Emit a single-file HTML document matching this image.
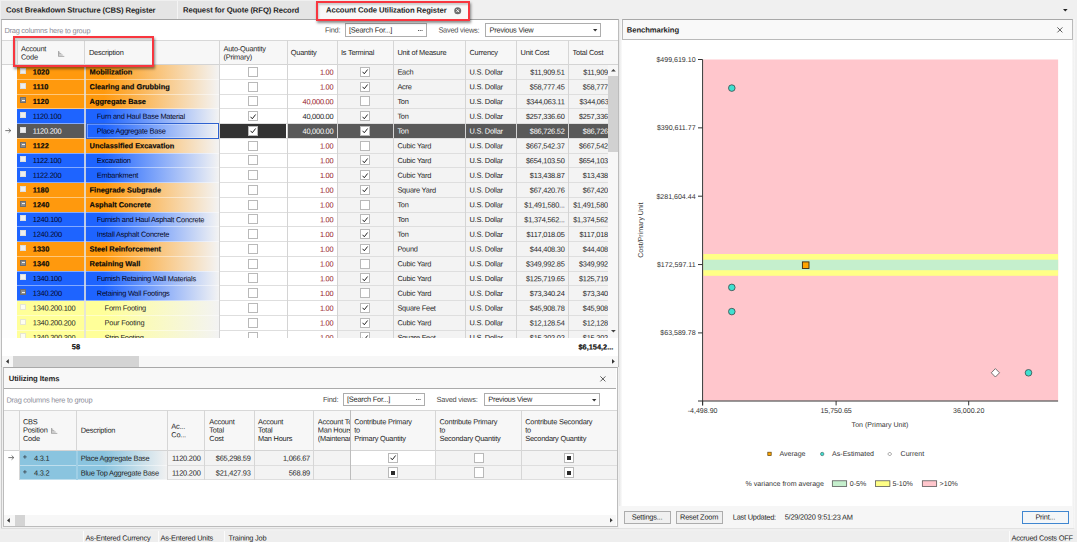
<!DOCTYPE html><html><head><meta charset="utf-8"><title>Account Code Utilization Register</title>
<style>
html,body{margin:0;padding:0}
body{width:1077px;height:546px;position:relative;overflow:hidden;background:#f0f0f0;
font-family:"Liberation Sans",sans-serif;font-size:7.4px;letter-spacing:-.22px;color:#1e1e1e;text-rendering:geometricPrecision;-webkit-font-smoothing:antialiased}
body div{position:absolute;box-sizing:border-box}
.t{white-space:nowrap;height:10px;line-height:10px}
.b{font-weight:bold;font-size:7.4px;letter-spacing:0;color:#0a0a0a;-webkit-text-stroke:.18px #0a0a0a}
.tab{font-weight:bold;font-size:7.7px;letter-spacing:-.1px;color:#262626}
.g{color:#8b8b97}
.lab{color:#4a4a4a}
.red{color:#961626}
.w{color:#fff}
.ch{font-size:6.85px;color:#222}
svg{position:absolute;overflow:visible}
</style></head><body>
<div style="left:1.00px;top:1.40px;width:175.50px;height:18.10px;background:#e5e5e5"></div>
<div style="left:177.50px;top:1.40px;width:139.00px;height:18.10px;background:#e5e5e5"></div>
<div style="left:176.50px;top:1.40px;width:1.00px;height:18.10px;background:#f4f4f4"></div>
<div class="t tab" style="left:6px;top:5px;transform:translate(0.00px,0.62px) rotate(.03deg);">Cost Breakdown Structure (CBS) Register</div>
<div class="t tab" style="left:183px;top:5px;transform:translate(0.00px,0.62px) rotate(.03deg);">Request for Quote (RFQ) Record</div>
<svg style="left:1063.2px;top:8.9px" width="5" height="3"><path d="M0 0h4.6l-2.3 2.5z" fill="#222"/></svg>
<div style="left:1.20px;top:19.00px;width:617.80px;height:348.40px;background:#fff;border:1px solid #bcbcbc;border-top-color:#a4a4a4;border-bottom-color:#a9a9a9"></div>
<div class="t g" style="left:4px;top:26px;transform:translate(0.40px,0.12px) rotate(.03deg);">Drag columns here to group</div>
<div class="t lab" style="left:325px;top:25px;transform:translate(0.00px,0.62px) rotate(.03deg);">Find:</div>
<div style="left:345.30px;top:23.40px;width:81.30px;height:13.30px;background:#fff;border:1px solid #adadad"></div>
<div class="t" style="left:349px;top:25px;transform:translate(0.00px,0.42px) rotate(.03deg);">[Search For...]</div>
<svg style="left:417.5px;top:30px" width="5" height="2"><path d="M0 .5h4.5" stroke="#444" stroke-width="1" stroke-dasharray=".9 .9"/></svg>
<div class="t lab" style="left:438px;top:25px;transform:translate(0.40px,0.62px) rotate(.03deg);">Saved views:</div>
<div style="left:485.40px;top:23.40px;width:116.00px;height:13.30px;background:#fff;border:1px solid #adadad"></div>
<div class="t" style="left:489px;top:25px;transform:translate(0.60px,0.42px) rotate(.03deg);">Previous View</div>
<svg style="left:593.3px;top:29.4px" width="5" height="3"><path d="M0 0h4.4l-2.2 2.4z" fill="#333"/></svg>
<div style="left:2.20px;top:40.00px;width:615.80px;height:24.50px;background:#f7f7f7;border-top:1px solid #d8d8d8;border-bottom:1px solid #d4d4d4"></div>
<div style="left:16.90px;top:40.00px;width:1.00px;height:24.50px;background:#d6d6d6"></div>
<div style="left:84.10px;top:40.00px;width:1.00px;height:24.50px;background:#d6d6d6"></div>
<div style="left:219.10px;top:40.00px;width:1.00px;height:24.50px;background:#d6d6d6"></div>
<div style="left:286.50px;top:40.00px;width:1.00px;height:24.50px;background:#d6d6d6"></div>
<div style="left:336.80px;top:40.00px;width:1.00px;height:24.50px;background:#d6d6d6"></div>
<div style="left:393.20px;top:40.00px;width:1.00px;height:24.50px;background:#d6d6d6"></div>
<div style="left:465.10px;top:40.00px;width:1.00px;height:24.50px;background:#d6d6d6"></div>
<div style="left:516.10px;top:40.00px;width:1.00px;height:24.50px;background:#d6d6d6"></div>
<div style="left:568.20px;top:40.00px;width:1.00px;height:24.50px;background:#d6d6d6"></div>
<div class="t" style="left:21px;top:44px;transform:translate(0.00px,0.22px) rotate(.03deg);">Account</div>
<div class="t" style="left:21px;top:52px;transform:translate(0.00px,0.52px) rotate(.03deg);">Code</div>
<svg style="left:57.6px;top:50.6px" width="7" height="6"><path d="M.5 0v5.5M.5 1.2h1.6M.5 2.6h2.8M.5 4h4.2M.5 5.4h5.8" stroke="#9a9a9a" stroke-width=".8" fill="none"/></svg>
<div class="t" style="left:89px;top:47px;transform:translate(0.00px,0.92px) rotate(.03deg);">Description</div>
<div class="t" style="left:223px;top:44px;transform:translate(0.50px,0.22px) rotate(.03deg);">Auto-Quantity</div>
<div class="t" style="left:223px;top:52px;transform:translate(0.50px,0.52px) rotate(.03deg);">(Primary)</div>
<div class="t" style="left:290px;top:47px;transform:translate(0.80px,0.92px) rotate(.03deg);">Quantity</div>
<div class="t" style="left:341px;top:47px;transform:translate(0.00px,0.92px) rotate(.03deg);">Is Terminal</div>
<div class="t" style="left:397px;top:47px;transform:translate(0.40px,0.92px) rotate(.03deg);">Unit of Measure</div>
<div class="t" style="left:469px;top:47px;transform:translate(0.50px,0.92px) rotate(.03deg);">Currency</div>
<div class="t" style="left:520px;top:47px;transform:translate(0.60px,0.92px) rotate(.03deg);">Unit Cost</div>
<div class="t" style="left:572px;top:47px;width:36.00px;overflow:hidden;transform:translate(0.60px,0.92px) rotate(.03deg);">Total Cost</div>
<div style="left:0;top:64.5px;width:608.2px;height:273.0px;overflow:hidden">
<div style="left:2.20px;top:0.00px;width:15.20px;height:14.75px;background:#fdfdfd"></div>
<div style="left:17.40px;top:0.00px;width:67.20px;height:14.75px;background:#ff990d"></div>
<div style="left:84.60px;top:0.00px;width:134.50px;height:14.75px;background:linear-gradient(to right,#ff990d 0%,#ff990d 14%,#f3f3f3 100%)"></div>
<div style="left:219.10px;top:0.00px;width:117.70px;height:14.75px;background:#fff"></div>
<div style="left:336.80px;top:0.00px;width:271.40px;height:14.75px;background:#f3f3f3"></div>
<div style="left:2.20px;top:14.75px;width:15.20px;height:14.75px;background:#fdfdfd"></div>
<div style="left:17.40px;top:14.75px;width:67.20px;height:14.75px;background:#ff990d"></div>
<div style="left:84.60px;top:14.75px;width:134.50px;height:14.75px;background:linear-gradient(to right,#ff990d 0%,#ff990d 14%,#f3f3f3 100%)"></div>
<div style="left:219.10px;top:14.75px;width:117.70px;height:14.75px;background:#fff"></div>
<div style="left:336.80px;top:14.75px;width:271.40px;height:14.75px;background:#f3f3f3"></div>
<div style="left:2.20px;top:29.50px;width:15.20px;height:14.75px;background:#fdfdfd"></div>
<div style="left:17.40px;top:29.50px;width:67.20px;height:14.75px;background:#ff990d"></div>
<div style="left:84.60px;top:29.50px;width:134.50px;height:14.75px;background:linear-gradient(to right,#ff990d 0%,#ff990d 14%,#f3f3f3 100%)"></div>
<div style="left:219.10px;top:29.50px;width:117.70px;height:14.75px;background:#fff"></div>
<div style="left:336.80px;top:29.50px;width:271.40px;height:14.75px;background:#f3f3f3"></div>
<div style="left:2.20px;top:44.25px;width:15.20px;height:14.75px;background:#fdfdfd"></div>
<div style="left:17.40px;top:44.25px;width:67.20px;height:14.75px;background:#1e64ff"></div>
<div style="left:84.60px;top:44.25px;width:134.50px;height:14.75px;background:linear-gradient(to right,#1e64ff 0%,#1e64ff 14%,#f3f3f3 100%)"></div>
<div style="left:219.10px;top:44.25px;width:117.70px;height:14.75px;background:#fff"></div>
<div style="left:336.80px;top:44.25px;width:271.40px;height:14.75px;background:#f3f3f3"></div>
<div style="left:2.20px;top:59.00px;width:15.20px;height:14.75px;background:#fdfdfd"></div>
<div style="left:17.40px;top:59.00px;width:67.20px;height:14.75px;background:#595959"></div>
<div style="left:84.60px;top:59.00px;width:134.50px;height:14.75px;background:linear-gradient(to right,#1e64ff 0%,#1e64ff 14%,#f3f3f3 100%)"></div>
<div style="left:219.10px;top:59.00px;width:67.40px;height:14.75px;background:#333"></div>
<div style="left:286.50px;top:59.00px;width:321.70px;height:14.75px;background:#595959"></div>
<div style="left:2.20px;top:73.75px;width:15.20px;height:14.75px;background:#fdfdfd"></div>
<div style="left:17.40px;top:73.75px;width:67.20px;height:14.75px;background:#ff990d"></div>
<div style="left:84.60px;top:73.75px;width:134.50px;height:14.75px;background:linear-gradient(to right,#ff990d 0%,#ff990d 14%,#f3f3f3 100%)"></div>
<div style="left:219.10px;top:73.75px;width:117.70px;height:14.75px;background:#fff"></div>
<div style="left:336.80px;top:73.75px;width:271.40px;height:14.75px;background:#f3f3f3"></div>
<div style="left:2.20px;top:88.50px;width:15.20px;height:14.75px;background:#fdfdfd"></div>
<div style="left:17.40px;top:88.50px;width:67.20px;height:14.75px;background:#1e64ff"></div>
<div style="left:84.60px;top:88.50px;width:134.50px;height:14.75px;background:linear-gradient(to right,#1e64ff 0%,#1e64ff 14%,#f3f3f3 100%)"></div>
<div style="left:219.10px;top:88.50px;width:117.70px;height:14.75px;background:#fff"></div>
<div style="left:336.80px;top:88.50px;width:271.40px;height:14.75px;background:#f3f3f3"></div>
<div style="left:2.20px;top:103.25px;width:15.20px;height:14.75px;background:#fdfdfd"></div>
<div style="left:17.40px;top:103.25px;width:67.20px;height:14.75px;background:#1e64ff"></div>
<div style="left:84.60px;top:103.25px;width:134.50px;height:14.75px;background:linear-gradient(to right,#1e64ff 0%,#1e64ff 14%,#f3f3f3 100%)"></div>
<div style="left:219.10px;top:103.25px;width:117.70px;height:14.75px;background:#fff"></div>
<div style="left:336.80px;top:103.25px;width:271.40px;height:14.75px;background:#f3f3f3"></div>
<div style="left:2.20px;top:118.00px;width:15.20px;height:14.75px;background:#fdfdfd"></div>
<div style="left:17.40px;top:118.00px;width:67.20px;height:14.75px;background:#ff990d"></div>
<div style="left:84.60px;top:118.00px;width:134.50px;height:14.75px;background:linear-gradient(to right,#ff990d 0%,#ff990d 14%,#f3f3f3 100%)"></div>
<div style="left:219.10px;top:118.00px;width:117.70px;height:14.75px;background:#fff"></div>
<div style="left:336.80px;top:118.00px;width:271.40px;height:14.75px;background:#f3f3f3"></div>
<div style="left:2.20px;top:132.75px;width:15.20px;height:14.75px;background:#fdfdfd"></div>
<div style="left:17.40px;top:132.75px;width:67.20px;height:14.75px;background:#ff990d"></div>
<div style="left:84.60px;top:132.75px;width:134.50px;height:14.75px;background:linear-gradient(to right,#ff990d 0%,#ff990d 14%,#f3f3f3 100%)"></div>
<div style="left:219.10px;top:132.75px;width:117.70px;height:14.75px;background:#fff"></div>
<div style="left:336.80px;top:132.75px;width:271.40px;height:14.75px;background:#f3f3f3"></div>
<div style="left:2.20px;top:147.50px;width:15.20px;height:14.75px;background:#fdfdfd"></div>
<div style="left:17.40px;top:147.50px;width:67.20px;height:14.75px;background:#1e64ff"></div>
<div style="left:84.60px;top:147.50px;width:134.50px;height:14.75px;background:linear-gradient(to right,#1e64ff 0%,#1e64ff 14%,#f3f3f3 100%)"></div>
<div style="left:219.10px;top:147.50px;width:117.70px;height:14.75px;background:#fff"></div>
<div style="left:336.80px;top:147.50px;width:271.40px;height:14.75px;background:#f3f3f3"></div>
<div style="left:2.20px;top:162.25px;width:15.20px;height:14.75px;background:#fdfdfd"></div>
<div style="left:17.40px;top:162.25px;width:67.20px;height:14.75px;background:#1e64ff"></div>
<div style="left:84.60px;top:162.25px;width:134.50px;height:14.75px;background:linear-gradient(to right,#1e64ff 0%,#1e64ff 14%,#f3f3f3 100%)"></div>
<div style="left:219.10px;top:162.25px;width:117.70px;height:14.75px;background:#fff"></div>
<div style="left:336.80px;top:162.25px;width:271.40px;height:14.75px;background:#f3f3f3"></div>
<div style="left:2.20px;top:177.00px;width:15.20px;height:14.75px;background:#fdfdfd"></div>
<div style="left:17.40px;top:177.00px;width:67.20px;height:14.75px;background:#ff990d"></div>
<div style="left:84.60px;top:177.00px;width:134.50px;height:14.75px;background:linear-gradient(to right,#ff990d 0%,#ff990d 14%,#f3f3f3 100%)"></div>
<div style="left:219.10px;top:177.00px;width:117.70px;height:14.75px;background:#fff"></div>
<div style="left:336.80px;top:177.00px;width:271.40px;height:14.75px;background:#f3f3f3"></div>
<div style="left:2.20px;top:191.75px;width:15.20px;height:14.75px;background:#fdfdfd"></div>
<div style="left:17.40px;top:191.75px;width:67.20px;height:14.75px;background:#ff990d"></div>
<div style="left:84.60px;top:191.75px;width:134.50px;height:14.75px;background:linear-gradient(to right,#ff990d 0%,#ff990d 14%,#f3f3f3 100%)"></div>
<div style="left:219.10px;top:191.75px;width:117.70px;height:14.75px;background:#fff"></div>
<div style="left:336.80px;top:191.75px;width:271.40px;height:14.75px;background:#f3f3f3"></div>
<div style="left:2.20px;top:206.50px;width:15.20px;height:14.75px;background:#fdfdfd"></div>
<div style="left:17.40px;top:206.50px;width:67.20px;height:14.75px;background:#1e64ff"></div>
<div style="left:84.60px;top:206.50px;width:134.50px;height:14.75px;background:linear-gradient(to right,#1e64ff 0%,#1e64ff 14%,#f3f3f3 100%)"></div>
<div style="left:219.10px;top:206.50px;width:117.70px;height:14.75px;background:#fff"></div>
<div style="left:336.80px;top:206.50px;width:271.40px;height:14.75px;background:#f3f3f3"></div>
<div style="left:2.20px;top:221.25px;width:15.20px;height:14.75px;background:#fdfdfd"></div>
<div style="left:17.40px;top:221.25px;width:67.20px;height:14.75px;background:#1e64ff"></div>
<div style="left:84.60px;top:221.25px;width:134.50px;height:14.75px;background:linear-gradient(to right,#1e64ff 0%,#1e64ff 14%,#f3f3f3 100%)"></div>
<div style="left:219.10px;top:221.25px;width:117.70px;height:14.75px;background:#fff"></div>
<div style="left:336.80px;top:221.25px;width:271.40px;height:14.75px;background:#f3f3f3"></div>
<div style="left:2.20px;top:236.00px;width:15.20px;height:14.75px;background:#fdfdfd"></div>
<div style="left:17.40px;top:236.00px;width:67.20px;height:14.75px;background:#ffff99"></div>
<div style="left:84.60px;top:236.00px;width:134.50px;height:14.75px;background:linear-gradient(to right,#ffff99 0%,#ffff99 14%,#f3f3f3 100%)"></div>
<div style="left:219.10px;top:236.00px;width:117.70px;height:14.75px;background:#fff"></div>
<div style="left:336.80px;top:236.00px;width:271.40px;height:14.75px;background:#f3f3f3"></div>
<div style="left:2.20px;top:250.75px;width:15.20px;height:14.75px;background:#fdfdfd"></div>
<div style="left:17.40px;top:250.75px;width:67.20px;height:14.75px;background:#ffff99"></div>
<div style="left:84.60px;top:250.75px;width:134.50px;height:14.75px;background:linear-gradient(to right,#ffff99 0%,#ffff99 14%,#f3f3f3 100%)"></div>
<div style="left:219.10px;top:250.75px;width:117.70px;height:14.75px;background:#fff"></div>
<div style="left:336.80px;top:250.75px;width:271.40px;height:14.75px;background:#f3f3f3"></div>
<div style="left:2.20px;top:265.50px;width:15.20px;height:14.75px;background:#fdfdfd"></div>
<div style="left:17.40px;top:265.50px;width:67.20px;height:14.75px;background:#ffff99"></div>
<div style="left:84.60px;top:265.50px;width:134.50px;height:14.75px;background:linear-gradient(to right,#ffff99 0%,#ffff99 14%,#f3f3f3 100%)"></div>
<div style="left:219.10px;top:265.50px;width:117.70px;height:14.75px;background:#fff"></div>
<div style="left:336.80px;top:265.50px;width:271.40px;height:14.75px;background:#f3f3f3"></div>
<div style="left:17.40px;top:14.25px;width:202.20px;height:1.00px;background:rgba(255,255,255,.45)"></div>
<div style="left:219.60px;top:14.25px;width:388.60px;height:1.00px;background:#dedede"></div>
<div style="left:17.40px;top:29.00px;width:202.20px;height:1.00px;background:rgba(255,255,255,.45)"></div>
<div style="left:219.60px;top:29.00px;width:388.60px;height:1.00px;background:#dedede"></div>
<div style="left:17.40px;top:43.75px;width:202.20px;height:1.00px;background:rgba(255,255,255,.45)"></div>
<div style="left:219.60px;top:43.75px;width:388.60px;height:1.00px;background:#dedede"></div>
<div style="left:17.40px;top:58.50px;width:202.20px;height:1.00px;background:rgba(255,255,255,.45)"></div>
<div style="left:219.60px;top:58.50px;width:388.60px;height:1.00px;background:#dedede"></div>
<div style="left:17.40px;top:73.25px;width:202.20px;height:1.00px;background:rgba(255,255,255,.45)"></div>
<div style="left:219.60px;top:73.25px;width:388.60px;height:1.00px;background:#dedede"></div>
<div style="left:17.40px;top:88.00px;width:202.20px;height:1.00px;background:rgba(255,255,255,.45)"></div>
<div style="left:219.60px;top:88.00px;width:388.60px;height:1.00px;background:#dedede"></div>
<div style="left:17.40px;top:102.75px;width:202.20px;height:1.00px;background:rgba(255,255,255,.45)"></div>
<div style="left:219.60px;top:102.75px;width:388.60px;height:1.00px;background:#dedede"></div>
<div style="left:17.40px;top:117.50px;width:202.20px;height:1.00px;background:rgba(255,255,255,.45)"></div>
<div style="left:219.60px;top:117.50px;width:388.60px;height:1.00px;background:#dedede"></div>
<div style="left:17.40px;top:132.25px;width:202.20px;height:1.00px;background:rgba(255,255,255,.45)"></div>
<div style="left:219.60px;top:132.25px;width:388.60px;height:1.00px;background:#dedede"></div>
<div style="left:17.40px;top:147.00px;width:202.20px;height:1.00px;background:rgba(255,255,255,.45)"></div>
<div style="left:219.60px;top:147.00px;width:388.60px;height:1.00px;background:#dedede"></div>
<div style="left:17.40px;top:161.75px;width:202.20px;height:1.00px;background:rgba(255,255,255,.45)"></div>
<div style="left:219.60px;top:161.75px;width:388.60px;height:1.00px;background:#dedede"></div>
<div style="left:17.40px;top:176.50px;width:202.20px;height:1.00px;background:rgba(255,255,255,.45)"></div>
<div style="left:219.60px;top:176.50px;width:388.60px;height:1.00px;background:#dedede"></div>
<div style="left:17.40px;top:191.25px;width:202.20px;height:1.00px;background:rgba(255,255,255,.45)"></div>
<div style="left:219.60px;top:191.25px;width:388.60px;height:1.00px;background:#dedede"></div>
<div style="left:17.40px;top:206.00px;width:202.20px;height:1.00px;background:rgba(255,255,255,.45)"></div>
<div style="left:219.60px;top:206.00px;width:388.60px;height:1.00px;background:#dedede"></div>
<div style="left:17.40px;top:220.75px;width:202.20px;height:1.00px;background:rgba(255,255,255,.45)"></div>
<div style="left:219.60px;top:220.75px;width:388.60px;height:1.00px;background:#dedede"></div>
<div style="left:17.40px;top:235.50px;width:202.20px;height:1.00px;background:rgba(255,255,255,.45)"></div>
<div style="left:219.60px;top:235.50px;width:388.60px;height:1.00px;background:#dedede"></div>
<div style="left:17.40px;top:250.25px;width:202.20px;height:1.00px;background:rgba(255,255,255,.45)"></div>
<div style="left:219.60px;top:250.25px;width:388.60px;height:1.00px;background:#dedede"></div>
<div style="left:17.40px;top:265.00px;width:202.20px;height:1.00px;background:rgba(255,255,255,.45)"></div>
<div style="left:219.60px;top:265.00px;width:388.60px;height:1.00px;background:#dedede"></div>
<div style="left:17.40px;top:279.75px;width:202.20px;height:1.00px;background:rgba(255,255,255,.45)"></div>
<div style="left:219.60px;top:279.75px;width:388.60px;height:1.00px;background:#dedede"></div>
<div style="left:20.20px;top:3.27px;width:6px;height:6px;background:#eeeeee;border:1px solid #dddddd"></div>
<div class="t b" style="left:32px;top:2px;transform:translate(0.80px,0.62px) rotate(.03deg);">1020</div>
<div class="t b" style="left:89px;top:2px;width:129.40px;overflow:hidden;transform:translate(0.60px,0.62px) rotate(.03deg);">Mobilization</div>
<div style="left:248.20px;top:2.28px;width:10.2px;height:10.2px;background:#fff;border:1px solid #b9b9b9"></div>
<div class="t red" style="left:133px;top:2px;width:200px;text-align:right;transform:translate(0.40px,0.62px) rotate(.03deg);">1.00</div>
<div style="left:360.30px;top:2.28px;width:10.2px;height:10.2px;background:#fff;border:1px solid #b9b9b9"></div>
<svg style="left:362.40px;top:4.88px" width="6" height="5.4"><path d="M.6 2.8l1.7 2L5.6 .5" stroke="#262626" stroke-width="1" fill="none"/></svg>
<div class="t" style="left:397px;top:2px;transform:translate(0.40px,0.62px) rotate(.03deg);">Each</div>
<div class="t" style="left:469px;top:2px;transform:translate(0.50px,0.62px) rotate(.03deg);">U.S. Dollar</div>
<div class="t" style="left:364px;top:2px;width:200px;text-align:right;transform:translate(0.60px,0.62px) rotate(.03deg);">$11,909.51</div>
<div class="t" style="left:417px;top:2px;width:200px;text-align:right;transform:translate(0.60px,0.62px) rotate(.03deg);">$11,909.51</div>
<div style="left:20.20px;top:18.03px;width:6px;height:6px;background:#eeeeee;border:1px solid #dddddd"></div>
<div class="t b" style="left:32px;top:17px;transform:translate(0.80px,0.37px) rotate(.03deg);">1110</div>
<div class="t b" style="left:89px;top:17px;width:129.40px;overflow:hidden;transform:translate(0.60px,0.37px) rotate(.03deg);">Clearing and Grubbing</div>
<div style="left:248.20px;top:17.02px;width:10.2px;height:10.2px;background:#fff;border:1px solid #b9b9b9"></div>
<div class="t red" style="left:133px;top:17px;width:200px;text-align:right;transform:translate(0.40px,0.37px) rotate(.03deg);">1.00</div>
<div style="left:360.30px;top:17.02px;width:10.2px;height:10.2px;background:#fff;border:1px solid #b9b9b9"></div>
<svg style="left:362.40px;top:19.62px" width="6" height="5.4"><path d="M.6 2.8l1.7 2L5.6 .5" stroke="#262626" stroke-width="1" fill="none"/></svg>
<div class="t" style="left:397px;top:17px;transform:translate(0.40px,0.37px) rotate(.03deg);">Acre</div>
<div class="t" style="left:469px;top:17px;transform:translate(0.50px,0.37px) rotate(.03deg);">U.S. Dollar</div>
<div class="t" style="left:364px;top:17px;width:200px;text-align:right;transform:translate(0.60px,0.37px) rotate(.03deg);">$58,777.45</div>
<div class="t" style="left:417px;top:17px;width:200px;text-align:right;transform:translate(0.60px,0.37px) rotate(.03deg);">$58,777.45</div>
<div style="left:20.20px;top:32.77px;width:6px;height:6px;background:#8c8c8c;border:1px solid #6e6e6e"></div>
<div style="left:21.60px;top:35.27px;width:3.2px;height:1px;background:#f0f0f0"></div>
<div class="t b" style="left:32px;top:32px;transform:translate(0.80px,0.12px) rotate(.03deg);">1120</div>
<div class="t b" style="left:89px;top:32px;width:129.40px;overflow:hidden;transform:translate(0.60px,0.12px) rotate(.03deg);">Aggregate Base</div>
<div style="left:248.20px;top:31.77px;width:10.2px;height:10.2px;background:#fff;border:1px solid #b9b9b9"></div>
<div class="t red" style="left:133px;top:32px;width:200px;text-align:right;transform:translate(0.40px,0.12px) rotate(.03deg);">40,000.00</div>
<div style="left:360.30px;top:31.77px;width:10.2px;height:10.2px;background:#fff;border:1px solid #b9b9b9"></div>
<div class="t" style="left:397px;top:32px;transform:translate(0.40px,0.12px) rotate(.03deg);">Ton</div>
<div class="t" style="left:469px;top:32px;transform:translate(0.50px,0.12px) rotate(.03deg);">U.S. Dollar</div>
<div class="t" style="left:364px;top:32px;width:200px;text-align:right;transform:translate(0.60px,0.12px) rotate(.03deg);">$344,063.11</div>
<div class="t" style="left:417px;top:32px;width:200px;text-align:right;transform:translate(0.60px,0.12px) rotate(.03deg);">$344,063.11</div>
<div style="left:20.20px;top:47.52px;width:6px;height:6px;background:#eeeeee;border:1px solid #dddddd"></div>
<div class="t" style="left:32px;top:46px;transform:translate(0.80px,0.87px) rotate(.03deg);color:#040418">1120.100</div>
<div class="t" style="left:96px;top:46px;width:122.20px;overflow:hidden;transform:translate(0.80px,0.87px) rotate(.03deg);color:#040418">Furn and Haul Base Material</div>
<div style="left:248.20px;top:46.52px;width:10.2px;height:10.2px;background:#fff;border:1px solid #b9b9b9"></div>
<svg style="left:250.30px;top:49.12px" width="6" height="5.4"><path d="M.6 2.8l1.7 2L5.6 .5" stroke="#262626" stroke-width="1" fill="none"/></svg>
<div class="t" style="left:133px;top:46px;width:200px;text-align:right;transform:translate(0.40px,0.87px) rotate(.03deg);">40,000.00</div>
<div style="left:360.30px;top:46.52px;width:10.2px;height:10.2px;background:#fff;border:1px solid #b9b9b9"></div>
<svg style="left:362.40px;top:49.12px" width="6" height="5.4"><path d="M.6 2.8l1.7 2L5.6 .5" stroke="#262626" stroke-width="1" fill="none"/></svg>
<div class="t" style="left:397px;top:46px;transform:translate(0.40px,0.87px) rotate(.03deg);">Ton</div>
<div class="t" style="left:469px;top:46px;transform:translate(0.50px,0.87px) rotate(.03deg);">U.S. Dollar</div>
<div class="t" style="left:364px;top:46px;width:200px;text-align:right;transform:translate(0.60px,0.87px) rotate(.03deg);">$257,336.60</div>
<div class="t" style="left:417px;top:46px;width:200px;text-align:right;transform:translate(0.60px,0.87px) rotate(.03deg);">$257,336.60</div>
<div style="left:20.20px;top:62.27px;width:6px;height:6px;background:#eeeeee;border:1px solid #dddddd"></div>
<div class="t" style="left:32px;top:61px;transform:translate(0.80px,0.62px) rotate(.03deg);color:#fff">1120.200</div>
<div class="t" style="left:96px;top:61px;width:122.20px;overflow:hidden;transform:translate(0.80px,0.62px) rotate(.03deg);color:#040418">Place Aggregate Base</div>
<div style="left:248.20px;top:61.27px;width:10.2px;height:10.2px;background:#fff;border:1px solid #b9b9b9"></div>
<svg style="left:250.30px;top:63.88px" width="6" height="5.4"><path d="M.6 2.8l1.7 2L5.6 .5" stroke="#262626" stroke-width="1" fill="none"/></svg>
<div class="t w" style="left:133px;top:61px;width:200px;text-align:right;transform:translate(0.40px,0.62px) rotate(.03deg);">40,000.00</div>
<div style="left:360.30px;top:61.27px;width:10.2px;height:10.2px;background:#fff;border:1px solid #b9b9b9"></div>
<svg style="left:362.40px;top:63.88px" width="6" height="5.4"><path d="M.6 2.8l1.7 2L5.6 .5" stroke="#262626" stroke-width="1" fill="none"/></svg>
<div class="t w" style="left:397px;top:61px;transform:translate(0.40px,0.62px) rotate(.03deg);">Ton</div>
<div class="t w" style="left:469px;top:61px;transform:translate(0.50px,0.62px) rotate(.03deg);">U.S. Dollar</div>
<div class="t w" style="left:364px;top:61px;width:200px;text-align:right;transform:translate(0.60px,0.62px) rotate(.03deg);">$86,726.52</div>
<div class="t w" style="left:417px;top:61px;width:200px;text-align:right;transform:translate(0.60px,0.62px) rotate(.03deg);">$86,726.52</div>
<div style="left:85.60px;top:58.70px;width:133.40px;height:15.35px;border:1px solid #2f62d0;box-shadow:inset 0 0 0 .6px rgba(255,255,255,.6)"></div>
<svg style="left:4.6px;top:63.77px" width="7" height="6"><path d="M.3 2.6h5.4M3.6 .5l2.2 2.1-2.2 2.1" stroke="#555" stroke-width=".8" fill="none"/></svg>
<div style="left:20.20px;top:77.02px;width:6px;height:6px;background:#8c8c8c;border:1px solid #6e6e6e"></div>
<div style="left:21.60px;top:79.52px;width:3.2px;height:1px;background:#f0f0f0"></div>
<div class="t b" style="left:32px;top:76px;transform:translate(0.80px,0.37px) rotate(.03deg);">1122</div>
<div class="t b" style="left:89px;top:76px;width:129.40px;overflow:hidden;transform:translate(0.60px,0.37px) rotate(.03deg);">Unclassified Excavation</div>
<div style="left:248.20px;top:76.03px;width:10.2px;height:10.2px;background:#fff;border:1px solid #b9b9b9"></div>
<div class="t red" style="left:133px;top:76px;width:200px;text-align:right;transform:translate(0.40px,0.37px) rotate(.03deg);">1.00</div>
<div style="left:360.30px;top:76.03px;width:10.2px;height:10.2px;background:#fff;border:1px solid #b9b9b9"></div>
<div class="t" style="left:397px;top:76px;transform:translate(0.40px,0.37px) rotate(.03deg);">Cubic Yard</div>
<div class="t" style="left:469px;top:76px;transform:translate(0.50px,0.37px) rotate(.03deg);">U.S. Dollar</div>
<div class="t" style="left:364px;top:76px;width:200px;text-align:right;transform:translate(0.60px,0.37px) rotate(.03deg);">$667,542.37</div>
<div class="t" style="left:417px;top:76px;width:200px;text-align:right;transform:translate(0.60px,0.37px) rotate(.03deg);">$667,542.37</div>
<div style="left:20.20px;top:91.77px;width:6px;height:6px;background:#eeeeee;border:1px solid #dddddd"></div>
<div class="t" style="left:32px;top:91px;transform:translate(0.80px,0.12px) rotate(.03deg);color:#040418">1122.100</div>
<div class="t" style="left:96px;top:91px;width:122.20px;overflow:hidden;transform:translate(0.80px,0.12px) rotate(.03deg);color:#040418">Excavation</div>
<div style="left:248.20px;top:90.78px;width:10.2px;height:10.2px;background:#fff;border:1px solid #b9b9b9"></div>
<div class="t red" style="left:133px;top:91px;width:200px;text-align:right;transform:translate(0.40px,0.12px) rotate(.03deg);">1.00</div>
<div style="left:360.30px;top:90.78px;width:10.2px;height:10.2px;background:#fff;border:1px solid #b9b9b9"></div>
<svg style="left:362.40px;top:93.38px" width="6" height="5.4"><path d="M.6 2.8l1.7 2L5.6 .5" stroke="#262626" stroke-width="1" fill="none"/></svg>
<div class="t" style="left:397px;top:91px;transform:translate(0.40px,0.12px) rotate(.03deg);">Cubic Yard</div>
<div class="t" style="left:469px;top:91px;transform:translate(0.50px,0.12px) rotate(.03deg);">U.S. Dollar</div>
<div class="t" style="left:364px;top:91px;width:200px;text-align:right;transform:translate(0.60px,0.12px) rotate(.03deg);">$654,103.50</div>
<div class="t" style="left:417px;top:91px;width:200px;text-align:right;transform:translate(0.60px,0.12px) rotate(.03deg);">$654,103.50</div>
<div style="left:20.20px;top:106.52px;width:6px;height:6px;background:#eeeeee;border:1px solid #dddddd"></div>
<div class="t" style="left:32px;top:105px;transform:translate(0.80px,0.87px) rotate(.03deg);color:#040418">1122.200</div>
<div class="t" style="left:96px;top:105px;width:122.20px;overflow:hidden;transform:translate(0.80px,0.87px) rotate(.03deg);color:#040418">Embankment</div>
<div style="left:248.20px;top:105.53px;width:10.2px;height:10.2px;background:#fff;border:1px solid #b9b9b9"></div>
<div class="t red" style="left:133px;top:105px;width:200px;text-align:right;transform:translate(0.40px,0.87px) rotate(.03deg);">1.00</div>
<div style="left:360.30px;top:105.53px;width:10.2px;height:10.2px;background:#fff;border:1px solid #b9b9b9"></div>
<svg style="left:362.40px;top:108.12px" width="6" height="5.4"><path d="M.6 2.8l1.7 2L5.6 .5" stroke="#262626" stroke-width="1" fill="none"/></svg>
<div class="t" style="left:397px;top:105px;transform:translate(0.40px,0.87px) rotate(.03deg);">Cubic Yard</div>
<div class="t" style="left:469px;top:105px;transform:translate(0.50px,0.87px) rotate(.03deg);">U.S. Dollar</div>
<div class="t" style="left:364px;top:105px;width:200px;text-align:right;transform:translate(0.60px,0.87px) rotate(.03deg);">$13,438.87</div>
<div class="t" style="left:417px;top:105px;width:200px;text-align:right;transform:translate(0.60px,0.87px) rotate(.03deg);">$13,438.87</div>
<div style="left:20.20px;top:121.27px;width:6px;height:6px;background:#eeeeee;border:1px solid #dddddd"></div>
<div class="t b" style="left:32px;top:120px;transform:translate(0.80px,0.62px) rotate(.03deg);">1180</div>
<div class="t b" style="left:89px;top:120px;width:129.40px;overflow:hidden;transform:translate(0.60px,0.62px) rotate(.03deg);">Finegrade Subgrade</div>
<div style="left:248.20px;top:120.28px;width:10.2px;height:10.2px;background:#fff;border:1px solid #b9b9b9"></div>
<div class="t red" style="left:133px;top:120px;width:200px;text-align:right;transform:translate(0.40px,0.62px) rotate(.03deg);">1.00</div>
<div style="left:360.30px;top:120.28px;width:10.2px;height:10.2px;background:#fff;border:1px solid #b9b9b9"></div>
<svg style="left:362.40px;top:122.88px" width="6" height="5.4"><path d="M.6 2.8l1.7 2L5.6 .5" stroke="#262626" stroke-width="1" fill="none"/></svg>
<div class="t" style="left:397px;top:120px;transform:translate(0.40px,0.62px) rotate(.03deg);">Square Yard</div>
<div class="t" style="left:469px;top:120px;transform:translate(0.50px,0.62px) rotate(.03deg);">U.S. Dollar</div>
<div class="t" style="left:364px;top:120px;width:200px;text-align:right;transform:translate(0.60px,0.62px) rotate(.03deg);">$67,420.76</div>
<div class="t" style="left:417px;top:120px;width:200px;text-align:right;transform:translate(0.60px,0.62px) rotate(.03deg);">$67,420.76</div>
<div style="left:20.20px;top:136.03px;width:6px;height:6px;background:#8c8c8c;border:1px solid #6e6e6e"></div>
<div style="left:21.60px;top:138.53px;width:3.2px;height:1px;background:#f0f0f0"></div>
<div class="t b" style="left:32px;top:135px;transform:translate(0.80px,0.37px) rotate(.03deg);">1240</div>
<div class="t b" style="left:89px;top:135px;width:129.40px;overflow:hidden;transform:translate(0.60px,0.37px) rotate(.03deg);">Asphalt Concrete</div>
<div style="left:248.20px;top:135.03px;width:10.2px;height:10.2px;background:#fff;border:1px solid #b9b9b9"></div>
<div class="t red" style="left:133px;top:135px;width:200px;text-align:right;transform:translate(0.40px,0.37px) rotate(.03deg);">1.00</div>
<div style="left:360.30px;top:135.03px;width:10.2px;height:10.2px;background:#fff;border:1px solid #b9b9b9"></div>
<div class="t" style="left:397px;top:135px;transform:translate(0.40px,0.37px) rotate(.03deg);">Ton</div>
<div class="t" style="left:469px;top:135px;transform:translate(0.50px,0.37px) rotate(.03deg);">U.S. Dollar</div>
<div class="t" style="left:364px;top:135px;width:200px;text-align:right;transform:translate(0.60px,0.37px) rotate(.03deg);">$1,491,580...</div>
<div class="t" style="left:417px;top:135px;width:200px;text-align:right;transform:translate(0.60px,0.37px) rotate(.03deg);">$1,491,580.35</div>
<div style="left:20.20px;top:150.78px;width:6px;height:6px;background:#eeeeee;border:1px solid #dddddd"></div>
<div class="t" style="left:32px;top:150px;transform:translate(0.80px,0.12px) rotate(.03deg);color:#040418">1240.100</div>
<div class="t" style="left:96px;top:150px;width:122.20px;overflow:hidden;transform:translate(0.80px,0.12px) rotate(.03deg);color:#040418">Furnish and Haul Asphalt Concrete</div>
<div style="left:248.20px;top:149.78px;width:10.2px;height:10.2px;background:#fff;border:1px solid #b9b9b9"></div>
<div class="t red" style="left:133px;top:150px;width:200px;text-align:right;transform:translate(0.40px,0.12px) rotate(.03deg);">1.00</div>
<div style="left:360.30px;top:149.78px;width:10.2px;height:10.2px;background:#fff;border:1px solid #b9b9b9"></div>
<svg style="left:362.40px;top:152.38px" width="6" height="5.4"><path d="M.6 2.8l1.7 2L5.6 .5" stroke="#262626" stroke-width="1" fill="none"/></svg>
<div class="t" style="left:397px;top:150px;transform:translate(0.40px,0.12px) rotate(.03deg);">Ton</div>
<div class="t" style="left:469px;top:150px;transform:translate(0.50px,0.12px) rotate(.03deg);">U.S. Dollar</div>
<div class="t" style="left:364px;top:150px;width:200px;text-align:right;transform:translate(0.60px,0.12px) rotate(.03deg);">$1,374,562...</div>
<div class="t" style="left:417px;top:150px;width:200px;text-align:right;transform:translate(0.60px,0.12px) rotate(.03deg);">$1,374,562.30</div>
<div style="left:20.20px;top:165.53px;width:6px;height:6px;background:#eeeeee;border:1px solid #dddddd"></div>
<div class="t" style="left:32px;top:164px;transform:translate(0.80px,0.87px) rotate(.03deg);color:#040418">1240.200</div>
<div class="t" style="left:96px;top:164px;width:122.20px;overflow:hidden;transform:translate(0.80px,0.87px) rotate(.03deg);color:#040418">Install Asphalt Concrete</div>
<div style="left:248.20px;top:164.53px;width:10.2px;height:10.2px;background:#fff;border:1px solid #b9b9b9"></div>
<div class="t red" style="left:133px;top:164px;width:200px;text-align:right;transform:translate(0.40px,0.87px) rotate(.03deg);">1.00</div>
<div style="left:360.30px;top:164.53px;width:10.2px;height:10.2px;background:#fff;border:1px solid #b9b9b9"></div>
<svg style="left:362.40px;top:167.12px" width="6" height="5.4"><path d="M.6 2.8l1.7 2L5.6 .5" stroke="#262626" stroke-width="1" fill="none"/></svg>
<div class="t" style="left:397px;top:164px;transform:translate(0.40px,0.87px) rotate(.03deg);">Ton</div>
<div class="t" style="left:469px;top:164px;transform:translate(0.50px,0.87px) rotate(.03deg);">U.S. Dollar</div>
<div class="t" style="left:364px;top:164px;width:200px;text-align:right;transform:translate(0.60px,0.87px) rotate(.03deg);">$117,018.05</div>
<div class="t" style="left:417px;top:164px;width:200px;text-align:right;transform:translate(0.60px,0.87px) rotate(.03deg);">$117,018.05</div>
<div style="left:20.20px;top:180.28px;width:6px;height:6px;background:#eeeeee;border:1px solid #dddddd"></div>
<div class="t b" style="left:32px;top:179px;transform:translate(0.80px,0.62px) rotate(.03deg);">1330</div>
<div class="t b" style="left:89px;top:179px;width:129.40px;overflow:hidden;transform:translate(0.60px,0.62px) rotate(.03deg);">Steel Reinforcement</div>
<div style="left:248.20px;top:179.28px;width:10.2px;height:10.2px;background:#fff;border:1px solid #b9b9b9"></div>
<div class="t red" style="left:133px;top:179px;width:200px;text-align:right;transform:translate(0.40px,0.62px) rotate(.03deg);">1.00</div>
<div style="left:360.30px;top:179.28px;width:10.2px;height:10.2px;background:#fff;border:1px solid #b9b9b9"></div>
<svg style="left:362.40px;top:181.88px" width="6" height="5.4"><path d="M.6 2.8l1.7 2L5.6 .5" stroke="#262626" stroke-width="1" fill="none"/></svg>
<div class="t" style="left:397px;top:179px;transform:translate(0.40px,0.62px) rotate(.03deg);">Pound</div>
<div class="t" style="left:469px;top:179px;transform:translate(0.50px,0.62px) rotate(.03deg);">U.S. Dollar</div>
<div class="t" style="left:364px;top:179px;width:200px;text-align:right;transform:translate(0.60px,0.62px) rotate(.03deg);">$44,408.30</div>
<div class="t" style="left:417px;top:179px;width:200px;text-align:right;transform:translate(0.60px,0.62px) rotate(.03deg);">$44,408.30</div>
<div style="left:20.20px;top:195.03px;width:6px;height:6px;background:#8c8c8c;border:1px solid #6e6e6e"></div>
<div style="left:21.60px;top:197.53px;width:3.2px;height:1px;background:#f0f0f0"></div>
<div class="t b" style="left:32px;top:194px;transform:translate(0.80px,0.37px) rotate(.03deg);">1340</div>
<div class="t b" style="left:89px;top:194px;width:129.40px;overflow:hidden;transform:translate(0.60px,0.37px) rotate(.03deg);">Retaining Wall</div>
<div style="left:248.20px;top:194.03px;width:10.2px;height:10.2px;background:#fff;border:1px solid #b9b9b9"></div>
<div class="t red" style="left:133px;top:194px;width:200px;text-align:right;transform:translate(0.40px,0.37px) rotate(.03deg);">1.00</div>
<div style="left:360.30px;top:194.03px;width:10.2px;height:10.2px;background:#fff;border:1px solid #b9b9b9"></div>
<div class="t" style="left:397px;top:194px;transform:translate(0.40px,0.37px) rotate(.03deg);">Cubic Yard</div>
<div class="t" style="left:469px;top:194px;transform:translate(0.50px,0.37px) rotate(.03deg);">U.S. Dollar</div>
<div class="t" style="left:364px;top:194px;width:200px;text-align:right;transform:translate(0.60px,0.37px) rotate(.03deg);">$349,992.85</div>
<div class="t" style="left:417px;top:194px;width:200px;text-align:right;transform:translate(0.60px,0.37px) rotate(.03deg);">$349,992.85</div>
<div style="left:20.20px;top:209.78px;width:6px;height:6px;background:#eeeeee;border:1px solid #dddddd"></div>
<div class="t" style="left:32px;top:209px;transform:translate(0.80px,0.12px) rotate(.03deg);color:#040418">1340.100</div>
<div class="t" style="left:96px;top:209px;width:122.20px;overflow:hidden;transform:translate(0.80px,0.12px) rotate(.03deg);color:#040418">Furnish Retaining Wall Materials</div>
<div style="left:248.20px;top:208.78px;width:10.2px;height:10.2px;background:#fff;border:1px solid #b9b9b9"></div>
<div class="t red" style="left:133px;top:209px;width:200px;text-align:right;transform:translate(0.40px,0.12px) rotate(.03deg);">1.00</div>
<div style="left:360.30px;top:208.78px;width:10.2px;height:10.2px;background:#fff;border:1px solid #b9b9b9"></div>
<svg style="left:362.40px;top:211.38px" width="6" height="5.4"><path d="M.6 2.8l1.7 2L5.6 .5" stroke="#262626" stroke-width="1" fill="none"/></svg>
<div class="t" style="left:397px;top:209px;transform:translate(0.40px,0.12px) rotate(.03deg);">Cubic Yard</div>
<div class="t" style="left:469px;top:209px;transform:translate(0.50px,0.12px) rotate(.03deg);">U.S. Dollar</div>
<div class="t" style="left:364px;top:209px;width:200px;text-align:right;transform:translate(0.60px,0.12px) rotate(.03deg);">$125,719.65</div>
<div class="t" style="left:417px;top:209px;width:200px;text-align:right;transform:translate(0.60px,0.12px) rotate(.03deg);">$125,719.65</div>
<div style="left:20.20px;top:224.53px;width:6px;height:6px;background:#8c8c8c;border:1px solid #6e6e6e"></div>
<div style="left:21.60px;top:227.03px;width:3.2px;height:1px;background:#f0f0f0"></div>
<div class="t" style="left:32px;top:223px;transform:translate(0.80px,0.87px) rotate(.03deg);color:#040418">1340.200</div>
<div class="t" style="left:96px;top:223px;width:122.20px;overflow:hidden;transform:translate(0.80px,0.87px) rotate(.03deg);color:#040418">Retaining Wall Footings</div>
<div style="left:248.20px;top:223.53px;width:10.2px;height:10.2px;background:#fff;border:1px solid #b9b9b9"></div>
<div class="t red" style="left:133px;top:223px;width:200px;text-align:right;transform:translate(0.40px,0.87px) rotate(.03deg);">1.00</div>
<div style="left:360.30px;top:223.53px;width:10.2px;height:10.2px;background:#fff;border:1px solid #b9b9b9"></div>
<div class="t" style="left:397px;top:223px;transform:translate(0.40px,0.87px) rotate(.03deg);">Cubic Yard</div>
<div class="t" style="left:469px;top:223px;transform:translate(0.50px,0.87px) rotate(.03deg);">U.S. Dollar</div>
<div class="t" style="left:364px;top:223px;width:200px;text-align:right;transform:translate(0.60px,0.87px) rotate(.03deg);">$73,340.24</div>
<div class="t" style="left:417px;top:223px;width:200px;text-align:right;transform:translate(0.60px,0.87px) rotate(.03deg);">$73,340.24</div>
<div style="left:20.20px;top:239.28px;width:6px;height:6px;background:#fdfdf0;border:1px solid #e6e6d2"></div>
<div class="t" style="left:32px;top:238px;transform:translate(0.80px,0.62px) rotate(.03deg);">1340.200.100</div>
<div class="t" style="left:104px;top:238px;width:114.40px;overflow:hidden;transform:translate(0.60px,0.62px) rotate(.03deg);">Form Footing</div>
<div style="left:248.20px;top:238.28px;width:10.2px;height:10.2px;background:#fff;border:1px solid #b9b9b9"></div>
<div class="t red" style="left:133px;top:238px;width:200px;text-align:right;transform:translate(0.40px,0.62px) rotate(.03deg);">1.00</div>
<div style="left:360.30px;top:238.28px;width:10.2px;height:10.2px;background:#fff;border:1px solid #b9b9b9"></div>
<svg style="left:362.40px;top:240.88px" width="6" height="5.4"><path d="M.6 2.8l1.7 2L5.6 .5" stroke="#262626" stroke-width="1" fill="none"/></svg>
<div class="t" style="left:397px;top:238px;transform:translate(0.40px,0.62px) rotate(.03deg);">Square Feet</div>
<div class="t" style="left:469px;top:238px;transform:translate(0.50px,0.62px) rotate(.03deg);">U.S. Dollar</div>
<div class="t" style="left:364px;top:238px;width:200px;text-align:right;transform:translate(0.60px,0.62px) rotate(.03deg);">$45,908.78</div>
<div class="t" style="left:417px;top:238px;width:200px;text-align:right;transform:translate(0.60px,0.62px) rotate(.03deg);">$45,908.78</div>
<div style="left:20.20px;top:254.03px;width:6px;height:6px;background:#fdfdf0;border:1px solid #e6e6d2"></div>
<div class="t" style="left:32px;top:253px;transform:translate(0.80px,0.37px) rotate(.03deg);">1340.200.200</div>
<div class="t" style="left:104px;top:253px;width:114.40px;overflow:hidden;transform:translate(0.60px,0.37px) rotate(.03deg);">Pour Footing</div>
<div style="left:248.20px;top:253.03px;width:10.2px;height:10.2px;background:#fff;border:1px solid #b9b9b9"></div>
<div class="t red" style="left:133px;top:253px;width:200px;text-align:right;transform:translate(0.40px,0.37px) rotate(.03deg);">1.00</div>
<div style="left:360.30px;top:253.03px;width:10.2px;height:10.2px;background:#fff;border:1px solid #b9b9b9"></div>
<svg style="left:362.40px;top:255.62px" width="6" height="5.4"><path d="M.6 2.8l1.7 2L5.6 .5" stroke="#262626" stroke-width="1" fill="none"/></svg>
<div class="t" style="left:397px;top:253px;transform:translate(0.40px,0.37px) rotate(.03deg);">Cubic Yard</div>
<div class="t" style="left:469px;top:253px;transform:translate(0.50px,0.37px) rotate(.03deg);">U.S. Dollar</div>
<div class="t" style="left:364px;top:253px;width:200px;text-align:right;transform:translate(0.60px,0.37px) rotate(.03deg);">$12,128.54</div>
<div class="t" style="left:417px;top:253px;width:200px;text-align:right;transform:translate(0.60px,0.37px) rotate(.03deg);">$12,128.54</div>
<div style="left:20.20px;top:268.78px;width:6px;height:6px;background:#fdfdf0;border:1px solid #e6e6d2"></div>
<div class="t" style="left:32px;top:268px;transform:translate(0.80px,0.12px) rotate(.03deg);">1340.200.300</div>
<div class="t" style="left:104px;top:268px;width:114.40px;overflow:hidden;transform:translate(0.60px,0.12px) rotate(.03deg);">Strip Footing</div>
<div style="left:248.20px;top:267.77px;width:10.2px;height:10.2px;background:#fff;border:1px solid #b9b9b9"></div>
<div class="t red" style="left:133px;top:268px;width:200px;text-align:right;transform:translate(0.40px,0.12px) rotate(.03deg);">1.00</div>
<div style="left:360.30px;top:267.77px;width:10.2px;height:10.2px;background:#fff;border:1px solid #b9b9b9"></div>
<svg style="left:362.40px;top:270.38px" width="6" height="5.4"><path d="M.6 2.8l1.7 2L5.6 .5" stroke="#262626" stroke-width="1" fill="none"/></svg>
<div class="t" style="left:397px;top:268px;transform:translate(0.40px,0.12px) rotate(.03deg);">Square Feet</div>
<div class="t" style="left:469px;top:268px;transform:translate(0.50px,0.12px) rotate(.03deg);">U.S. Dollar</div>
<div class="t" style="left:364px;top:268px;width:200px;text-align:right;transform:translate(0.60px,0.12px) rotate(.03deg);">$15,202.02</div>
<div class="t" style="left:417px;top:268px;width:200px;text-align:right;transform:translate(0.60px,0.12px) rotate(.03deg);">$15,202.02</div>
<div style="left:219.10px;top:0.00px;width:1.00px;height:273.00px;background:#d4d4d4"></div>
<div style="left:286.50px;top:0.00px;width:1.00px;height:273.00px;background:#d4d4d4"></div>
<div style="left:336.80px;top:0.00px;width:1.00px;height:273.00px;background:#d4d4d4"></div>
<div style="left:393.20px;top:0.00px;width:1.00px;height:273.00px;background:#d4d4d4"></div>
<div style="left:465.10px;top:0.00px;width:1.00px;height:273.00px;background:#d4d4d4"></div>
<div style="left:516.10px;top:0.00px;width:1.00px;height:273.00px;background:#d4d4d4"></div>
<div style="left:568.20px;top:0.00px;width:1.00px;height:273.00px;background:#d4d4d4"></div>
<div style="left:84.00px;top:0.00px;width:2.00px;height:273.00px;background:rgba(225,225,225,.82)"></div>
</div>
<div style="left:608.20px;top:64.50px;width:9.80px;height:273.00px;background:#f7f7f7"></div>
<div style="left:608.20px;top:76.10px;width:10.20px;height:75.50px;background:#d1d1d1"></div>
<svg style="left:610.6px;top:69px" width="5" height="3"><path d="M0 2.6h4.8l-2.4-2.6z" fill="#444"/></svg>
<svg style="left:610.6px;top:330px" width="5" height="3"><path d="M0 0h4.8l-2.4 2.6z" fill="#444"/></svg>
<div style="left:2.20px;top:337.50px;width:615.80px;height:18.30px;background:#fff"></div>
<div class="t b" style="left:-24px;top:342px;width:200px;text-align:center;transform:translate(0.00px,0.22px) rotate(.03deg);">58</div>
<div class="t b" style="left:413px;top:342px;width:200px;text-align:right;transform:translate(0.40px,0.42px) rotate(.03deg);">$6,154,2...</div>
<div style="left:2.20px;top:355.80px;width:615.80px;height:10.80px;background:#f7f7f7"></div>
<div style="left:12.50px;top:355.80px;width:126.20px;height:10.80px;background:#d4d4d4"></div>
<svg style="left:5.6px;top:358.8px" width="3" height="5"><path d="M2.8 0v4.8l-2.8-2.4z" fill="#333"/></svg>
<svg style="left:611.6px;top:358.8px" width="3" height="5"><path d="M0 0v4.8l2.8-2.4z" fill="#333"/></svg>
<div style="left:13.40px;top:36.00px;width:140.80px;height:31.10px;border:2px solid #f8363f;box-shadow:1.2px 1.6px 2.5px rgba(0,0,0,.45), inset 1.5px 2.5px 2px -.5px rgba(0,0,0,.22)"></div>
<div style="left:316.20px;top:0.80px;width:154.00px;height:20.00px;background:#f8f8f8;border:2px solid #f8363f;box-shadow:1.2px 1.6px 2.5px rgba(0,0,0,.45), inset 1.5px 2.5px 2px -.5px rgba(0,0,0,.18)"></div>
<div class="t tab" style="left:326px;top:5px;transform:translate(0.00px,0.62px) rotate(.03deg);">Account Code Utilization Register</div>
<svg style="left:454.4px;top:6.6px" width="8" height="8"><circle cx="3.7" cy="3.7" r="3.5" fill="#6e6e6e"/><path d="M2.3 2.3l2.8 2.8M5.1 2.3l-2.8 2.8" stroke="#f4f4f4" stroke-width="1"/></svg>
<div style="left:3.40px;top:367.40px;width:614.20px;height:159.30px;background:#fff;border:1px solid #bcbcbc;border-top-color:#a9a9a9"></div>
<div style="left:4.40px;top:368.40px;width:612.00px;height:20.20px;background:#f8f8f8;border-bottom:1px solid #ababab"></div>
<div class="t tab" style="left:8px;top:374px;transform:translate(0.70px,0.12px) rotate(.03deg);">Utilizing Items</div>
<svg style="left:600.20px;top:375.60px" width="6" height="6"><path d="M.4 .4l5 5M5.4 .4l-5 5" stroke="#333" stroke-width=".8"/></svg>
<div class="t g" style="left:6px;top:395px;transform:translate(0.40px,0.42px) rotate(.03deg);">Drag columns here to group</div>
<div class="t lab" style="left:323px;top:395px;transform:translate(0.00px,0.02px) rotate(.03deg);">Find:</div>
<div style="left:343.30px;top:392.70px;width:81.80px;height:13.60px;background:#fff;border:1px solid #adadad"></div>
<div class="t" style="left:347px;top:394px;transform:translate(0.00px,0.82px) rotate(.03deg);">[Search For...]</div>
<svg style="left:416px;top:399.3px" width="5" height="2"><path d="M0 .5h4.5" stroke="#444" stroke-width="1" stroke-dasharray=".9 .9"/></svg>
<div class="t lab" style="left:436px;top:395px;transform:translate(0.60px,0.02px) rotate(.03deg);">Saved views:</div>
<div style="left:484.00px;top:392.80px;width:115.60px;height:13.60px;background:#fff;border:1px solid #adadad"></div>
<div class="t" style="left:488px;top:394px;transform:translate(0.20px,0.82px) rotate(.03deg);">Previous View</div>
<svg style="left:592px;top:398.8px" width="5" height="3"><path d="M0 0h4.4l-2.2 2.4z" fill="#333"/></svg>
<div style="left:4.40px;top:410.30px;width:612.20px;height:40.30px;background:#f7f7f7;border-top:1px solid #d8d8d8;border-bottom:1px solid #d4d4d4"></div>
<div class="t" style="left:23px;top:417px;transform:translate(0.00px,0.22px) rotate(.03deg);">CBS</div>
<div class="t" style="left:23px;top:425px;transform:translate(0.00px,0.62px) rotate(.03deg);">Position</div>
<div class="t" style="left:23px;top:434px;transform:translate(0.00px,0.02px) rotate(.03deg);">Code</div>
<svg style="left:50.8px;top:427.6px" width="7" height="6"><path d="M.5 0v5.5M.5 1.2h1.6M.5 2.6h2.8M.5 4h4.2M.5 5.4h5.8" stroke="#9a9a9a" stroke-width=".8" fill="none"/></svg>
<div class="t" style="left:80px;top:425px;transform:translate(0.70px,0.72px) rotate(.03deg);">Description</div>
<div class="t" style="left:171px;top:421px;transform:translate(0.30px,0.82px) rotate(.03deg);">Ac...</div>
<div class="t" style="left:171px;top:430px;transform:translate(0.30px,0.22px) rotate(.03deg);">Co...</div>
<div class="t" style="left:209px;top:417px;transform:translate(0.30px,0.22px) rotate(.03deg);">Account</div>
<div class="t" style="left:209px;top:425px;transform:translate(0.30px,0.62px) rotate(.03deg);">Total</div>
<div class="t" style="left:209px;top:434px;transform:translate(0.30px,0.02px) rotate(.03deg);">Cost</div>
<div class="t" style="left:258px;top:417px;transform:translate(0.00px,0.22px) rotate(.03deg);">Account</div>
<div class="t" style="left:258px;top:425px;transform:translate(0.00px,0.62px) rotate(.03deg);">Total</div>
<div class="t" style="left:258px;top:434px;transform:translate(0.00px,0.02px) rotate(.03deg);">Man Hours</div>
<div class="t" style="left:317px;top:417px;width:32.60px;overflow:hidden;transform:translate(0.80px,0.22px) rotate(.03deg);">Account Total</div>
<div class="t" style="left:317px;top:425px;width:32.60px;overflow:hidden;transform:translate(0.80px,0.62px) rotate(.03deg);">Man Hours</div>
<div class="t" style="left:317px;top:434px;width:32.60px;overflow:hidden;transform:translate(0.80px,0.02px) rotate(.03deg);">(Maintenance)</div>
<div class="t" style="left:354px;top:417px;transform:translate(0.20px,0.22px) rotate(.03deg);">Contribute Primary</div>
<div class="t" style="left:354px;top:425px;transform:translate(0.20px,0.62px) rotate(.03deg);">to</div>
<div class="t" style="left:354px;top:434px;transform:translate(0.20px,0.02px) rotate(.03deg);">Primary Quantity</div>
<div class="t" style="left:439px;top:417px;transform:translate(0.50px,0.22px) rotate(.03deg);">Contribute Primary</div>
<div class="t" style="left:439px;top:425px;transform:translate(0.50px,0.62px) rotate(.03deg);">to</div>
<div class="t" style="left:439px;top:434px;transform:translate(0.50px,0.02px) rotate(.03deg);">Secondary Quantity</div>
<div class="t" style="left:525px;top:417px;transform:translate(0.20px,0.22px) rotate(.03deg);">Contribute Secondary</div>
<div class="t" style="left:525px;top:425px;transform:translate(0.20px,0.62px) rotate(.03deg);">to</div>
<div class="t" style="left:525px;top:434px;transform:translate(0.20px,0.02px) rotate(.03deg);">Secondary Quantity</div>
<div style="left:4.40px;top:450.60px;width:14.80px;height:14.60px;background:#fff"></div>
<div style="left:19.20px;top:450.60px;width:57.70px;height:14.60px;background:#8ac4df"></div>
<div style="left:76.90px;top:450.60px;width:90.60px;height:14.60px;background:linear-gradient(to right,#8ac4df 0%,#8ac4df 30%,#f1f1f1 100%)"></div>
<div style="left:167.50px;top:450.60px;width:449.10px;height:14.60px;background:#f3f3f3"></div>
<div style="left:350.40px;top:450.60px;width:85.20px;height:14.60px;background:#fff"></div>
<div style="left:4.40px;top:465.20px;width:14.80px;height:14.70px;background:#fff"></div>
<div style="left:19.20px;top:465.20px;width:57.70px;height:14.70px;background:#8ac4df"></div>
<div style="left:76.90px;top:465.20px;width:90.60px;height:14.70px;background:linear-gradient(to right,#8ac4df 0%,#8ac4df 30%,#f1f1f1 100%)"></div>
<div style="left:167.50px;top:465.20px;width:449.10px;height:14.70px;background:#f3f3f3"></div>
<div style="left:19.20px;top:464.70px;width:148.30px;height:1.00px;background:rgba(255,255,255,.45)"></div>
<div style="left:167.50px;top:464.70px;width:449.10px;height:1.00px;background:#dedede"></div>
<div style="left:19.20px;top:479.40px;width:148.30px;height:1.00px;background:rgba(255,255,255,.45)"></div>
<div style="left:167.50px;top:479.40px;width:449.10px;height:1.00px;background:#dedede"></div>
<svg style="left:22.7px;top:455.40px" width="4" height="4"><path d="M1.9 .1v3.6M.1 1.9h3.6" stroke="#3c4a55" stroke-width=".85"/></svg>
<div class="t" style="left:34px;top:453px;transform:translate(0.00px,0.82px) rotate(.03deg);">4.3.1</div>
<div class="t" style="left:80px;top:453px;transform:translate(0.70px,0.82px) rotate(.03deg);">Place Aggregate Base</div>
<div class="t" style="left:172px;top:453px;transform:translate(0.00px,0.82px) rotate(.03deg);">1120.200</div>
<div class="t" style="left:50px;top:453px;width:200px;text-align:right;transform:translate(0.60px,0.82px) rotate(.03deg);">$65,298.59</div>
<div class="t" style="left:110px;top:453px;width:200px;text-align:right;transform:translate(0.00px,0.82px) rotate(.03deg);">1,066.67</div>
<div style="left:387.90px;top:452.80px;width:10.2px;height:10.2px;background:#fff;border:1px solid #b9b9b9"></div>
<svg style="left:390.00px;top:455.40px" width="6" height="5.4"><path d="M.6 2.8l1.7 2L5.6 .5" stroke="#262626" stroke-width="1" fill="none"/></svg>
<div style="left:473.50px;top:452.80px;width:10.2px;height:10.2px;background:#fff;border:1px solid #b9b9b9"></div>
<div style="left:564.00px;top:452.80px;width:10.2px;height:10.2px;background:#fff;border:1px solid #b9b9b9"></div>
<svg style="left:567.10px;top:455.90px" width="4" height="4"><rect x="0" y="0" width="4" height="4" fill="#2b2b2b"/></svg>
<svg style="left:7.6px;top:455.30px" width="7" height="6"><path d="M.3 2.6h5.4M3.6 .5l2.2 2.1-2.2 2.1" stroke="#555" stroke-width=".8" fill="none"/></svg>
<svg style="left:22.7px;top:470.05px" width="4" height="4"><path d="M1.9 .1v3.6M.1 1.9h3.6" stroke="#3c4a55" stroke-width=".85"/></svg>
<div class="t" style="left:34px;top:468px;transform:translate(0.00px,0.47px) rotate(.03deg);">4.3.2</div>
<div class="t" style="left:80px;top:468px;transform:translate(0.70px,0.47px) rotate(.03deg);">Blue Top Aggregate Base</div>
<div class="t" style="left:172px;top:468px;transform:translate(0.00px,0.47px) rotate(.03deg);">1120.200</div>
<div class="t" style="left:50px;top:468px;width:200px;text-align:right;transform:translate(0.60px,0.47px) rotate(.03deg);">$21,427.93</div>
<div class="t" style="left:110px;top:468px;width:200px;text-align:right;transform:translate(0.00px,0.47px) rotate(.03deg);">568.89</div>
<div style="left:387.90px;top:467.45px;width:10.2px;height:10.2px;background:#fff;border:1px solid #b9b9b9"></div>
<svg style="left:391.00px;top:470.55px" width="4" height="4"><rect x="0" y="0" width="4" height="4" fill="#2b2b2b"/></svg>
<div style="left:473.50px;top:467.45px;width:10.2px;height:10.2px;background:#fff;border:1px solid #b9b9b9"></div>
<div style="left:564.00px;top:467.45px;width:10.2px;height:10.2px;background:#fff;border:1px solid #b9b9b9"></div>
<svg style="left:567.10px;top:470.55px" width="4" height="4"><rect x="0" y="0" width="4" height="4" fill="#2b2b2b"/></svg>
<div style="left:18.70px;top:410.30px;width:1.00px;height:69.60px;background:#d6d6d6"></div>
<div style="left:76.40px;top:410.30px;width:1.00px;height:69.60px;background:#d6d6d6"></div>
<div style="left:167.00px;top:410.30px;width:1.00px;height:69.60px;background:#d6d6d6"></div>
<div style="left:204.30px;top:410.30px;width:1.00px;height:69.60px;background:#d6d6d6"></div>
<div style="left:253.80px;top:410.30px;width:1.00px;height:69.60px;background:#d6d6d6"></div>
<div style="left:313.30px;top:410.30px;width:1.00px;height:69.60px;background:#d6d6d6"></div>
<div style="left:349.90px;top:410.30px;width:1.00px;height:69.60px;background:#bdbdbd"></div>
<div style="left:435.10px;top:410.30px;width:1.00px;height:69.60px;background:#d6d6d6"></div>
<div style="left:521.20px;top:410.30px;width:1.00px;height:69.60px;background:#d6d6d6"></div>
<div style="left:76.20px;top:450.60px;width:1.40px;height:29.30px;background:#9fcfe6"></div>
<div style="left:4.40px;top:514.60px;width:612.00px;height:11.10px;background:#f7f7f7"></div>
<div style="left:14.50px;top:514.60px;width:10.50px;height:11.00px;background:#d4d4d4"></div>
<svg style="left:7.4px;top:517.8px" width="3" height="5"><path d="M2.8 0v4.8l-2.8-2.4z" fill="#333"/></svg>
<svg style="left:609.8px;top:518.2px" width="3" height="5"><path d="M0 0v4.6l2.7-2.3z" fill="#3c3c3c"/></svg>
<div style="left:0.60px;top:367.00px;width:1.00px;height:161.60px;background:#c9c9c9"></div>
<div style="left:0.60px;top:528.00px;width:618.40px;height:1.00px;background:#dddddd"></div>
<div style="left:619.00px;top:19.50px;width:3.00px;height:508.50px;background:linear-gradient(to right,#e6e6e6,#fbfbfb)"></div>
<div style="left:622.00px;top:19.00px;width:449.50px;height:509.40px;background:#fff"></div>
<div style="left:1071.50px;top:19.00px;width:3.50px;height:509.40px;background:linear-gradient(to right,#fbfbfb,#f1f1f1 45%,#f8f8f8)"></div>
<div style="left:621.60px;top:19.00px;width:451.60px;height:20.80px;background:#f9f9f9;border:1px solid #bababa;border-top-color:#a8a8a8"></div>
<div class="t tab" style="left:626px;top:25px;transform:translate(0.80px,0.42px) rotate(.03deg);">Benchmarking</div>
<svg style="left:1056.60px;top:27.40px" width="6" height="6"><path d="M.4 .4l5 5M5.4 .4l-5 5" stroke="#333" stroke-width=".8"/></svg>
<div style="left:619.00px;top:506.20px;width:453.00px;height:21.40px;background:#f6f6f6"></div>
<div style="left:619.00px;top:527.60px;width:455.00px;height:1.00px;background:#e2e2e2"></div>
<svg style="left:0;top:0" width="1077" height="546" font-family="Liberation Sans, sans-serif" font-size="7.05" letter-spacing="0" fill="#333">
<rect x="703.2" y="59.5" width="354.90" height="341.10" fill="#ffc6cc"/>
<rect x="703.2" y="254" width="354.90" height="21.8" fill="#ffff86"/>
<rect x="703.2" y="259.7" width="354.90" height="10.5" fill="#c5efcd"/>
<path d="M702.6 59.5V405.4M698 401H1058.1" stroke="#333" stroke-width="1" fill="none"/>
<path d="M698 59.50h4.6" stroke="#333" stroke-width="1"/>
<text x="695.6" y="62.00" text-anchor="end">$499,619.10</text>
<path d="M698 127.85h4.6" stroke="#333" stroke-width="1"/>
<text x="695.6" y="130.35" text-anchor="end">$390,611.77</text>
<path d="M698 196.20h4.6" stroke="#333" stroke-width="1"/>
<text x="695.6" y="198.70" text-anchor="end">$281,604.44</text>
<path d="M698 264.55h4.6" stroke="#333" stroke-width="1"/>
<text x="695.6" y="267.05" text-anchor="end">$172,597.11</text>
<path d="M698 332.90h4.6" stroke="#333" stroke-width="1"/>
<text x="695.6" y="335.40" text-anchor="end">$63,589.78</text>
<path d="M702.6 401v4.4" stroke="#333" stroke-width="1"/>
<text x="702.6" y="413.1" text-anchor="middle">-4,498.90</text>
<path d="M836.1 401v4.4" stroke="#333" stroke-width="1"/>
<text x="836.1" y="413.1" text-anchor="middle">15,750.65</text>
<path d="M968.7 401v4.4" stroke="#333" stroke-width="1"/>
<text x="968.7" y="413.1" text-anchor="middle">36,000.20</text>
<text x="880" y="426.7" text-anchor="middle">Ton (Primary Unit)</text>
<text transform="translate(643.2 230.2) rotate(-90)" text-anchor="middle">Cost/Primary Unit</text>
<circle cx="731.8" cy="88.1" r="3.3" fill="#40e0d0" stroke="#3a4a4a" stroke-width=".8"/>
<circle cx="731.8" cy="287.4" r="3.3" fill="#40e0d0" stroke="#3a4a4a" stroke-width=".8"/>
<circle cx="731.8" cy="311.6" r="3.3" fill="#40e0d0" stroke="#3a4a4a" stroke-width=".8"/>
<circle cx="1028.5" cy="372.8" r="3.3" fill="#40e0d0" stroke="#3a4a4a" stroke-width=".8"/>
<rect x="802.4" y="261.9" width="6.6" height="6.6" fill="#ffa500" stroke="#3a2a10" stroke-width=".9"/>
<path d="M995.4 368.6l4.1 4.2-4.1 4.2-4.1-4.2z" fill="#fff" stroke="#555" stroke-width=".8"/>
<rect x="767.8" y="452.2" width="3.4" height="3.4" fill="#ffa500" stroke="#5a4010" stroke-width=".7"/>
<text x="779.4" y="456.1">Average</text>
<circle cx="822.2" cy="454" r="1.7" fill="#40e0d0" stroke="#3a5a5a" stroke-width=".6"/>
<text x="832.1" y="456.1">As-Estimated</text>
<path d="M889.7 452l2 2-2 2-2-2z" fill="#fff" stroke="#666" stroke-width=".6"/>
<text x="900.6" y="456.1">Current</text>
<text x="745.6" y="486.2">% variance from average</text>
<rect x="832.3" y="480.8" width="14.4" height="5.6" fill="#c5efcd" stroke="#444" stroke-width=".7"/>
<text x="849.8" y="486.2">0-5%</text>
<rect x="875.5" y="480.8" width="14.4" height="5.6" fill="#ffff86" stroke="#444" stroke-width=".7"/>
<text x="892.5" y="486.2">5-10%</text>
<rect x="922.3" y="480.8" width="14.4" height="5.6" fill="#ffc6cc" stroke="#444" stroke-width=".7"/>
<text x="939.6" y="486.2">&gt;10%</text>
</svg>
<div style="left:623.90px;top:510.50px;width:46.70px;height:13.20px;background:#f0f0f0;border:1px solid #adadad"></div>
<div class="t" style="left:547px;top:512px;width:200px;text-align:center;transform:translate(0.00px,0.42px) rotate(.03deg);">Settings...</div>
<div style="left:675.90px;top:510.50px;width:46.70px;height:13.20px;background:#f0f0f0;border:1px solid #adadad"></div>
<div class="t" style="left:599px;top:512px;width:200px;text-align:center;transform:translate(0.10px,0.42px) rotate(.03deg);">Reset Zoom</div>
<div class="t" style="left:732px;top:512px;transform:translate(0.80px,0.62px) rotate(.03deg);">Last Updated:</div>
<div class="t" style="left:784px;top:512px;transform:translate(0.70px,0.62px) rotate(.03deg);">5/29/2020 9:51:23 AM</div>
<div style="left:1021.80px;top:510.60px;width:46.90px;height:13.40px;background:#f4f6f8;border:1px solid #3f86d0"></div>
<div class="t" style="left:945px;top:512px;width:200px;text-align:center;transform:translate(0.20px,0.52px) rotate(.03deg);">Print...</div>
<div style="left:0.00px;top:531.40px;width:1077.00px;height:10.20px;background:#eeeeee"></div>
<div style="left:82.50px;top:531.40px;width:1.00px;height:10.20px;background:#fbfbfb"></div>
<div style="left:157.50px;top:531.40px;width:1.00px;height:10.20px;background:#fbfbfb"></div>
<div style="left:224.00px;top:531.40px;width:1.00px;height:10.20px;background:#fbfbfb"></div>
<div style="left:1008.50px;top:531.40px;width:1.00px;height:10.20px;background:#fbfbfb"></div>
<div class="t" style="left:85px;top:533px;transform:translate(0.60px,0.42px) rotate(.03deg);">As-Entered Currency</div>
<div class="t" style="left:160px;top:533px;transform:translate(0.60px,0.42px) rotate(.03deg);">As-Entered Units</div>
<div class="t" style="left:228px;top:533px;transform:translate(0.60px,0.42px) rotate(.03deg);">Training Job</div>
<div class="t" style="left:1011px;top:533px;transform:translate(0.60px,0.42px) rotate(.03deg);">Accrued Costs OFF</div>
<div style="left:0.00px;top:541.60px;width:1077.00px;height:4.40px;background:#fff"></div>
</body></html>
